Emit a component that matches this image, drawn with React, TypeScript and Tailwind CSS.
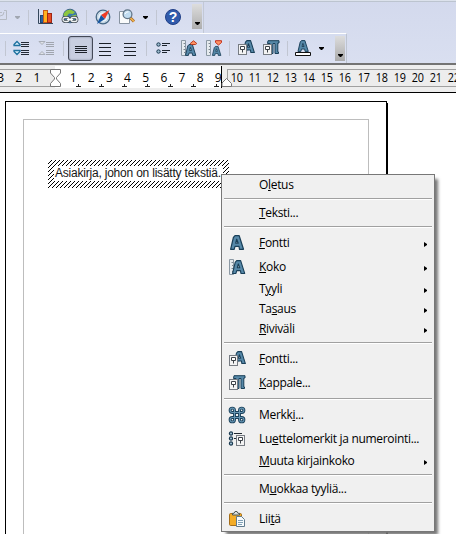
import React from "react";

type IconProps = { kind: string; className?: string };

const LetterA = ({ x = 0, y = 0, s = 1 }: { x?: number; y?: number; s?: number }) => (
  <path
    transform={`translate(${x} ${y}) scale(${s})`}
    d="M5 .7H9.2L13.5 14.3H9.5L9 11.3H5L4.2 14.3H.6L3.4 2.5ZM6.7 4.2L5.7 8.2H8.2Z"
    fill="#5688a8" stroke="#193f58" strokeWidth="1.2" fillRule="evenodd" strokeLinejoin="round"
  />
);

const StyleBox = ({ x, y }: { x: number; y: number }) => (
  <g transform={`translate(${x} ${y})`}>
    <rect x=".5" y=".5" width="8" height="10" fill="#f3f3f3" stroke="#777c83" />
    <path d="M2.5 2.5h4v3h-4zM4.5 5.5v3" fill="#fff" stroke="#3d4248" />
  </g>
);

const RulerStrip = () => (
  <>
    <path d="M.5 .5h4v15h-4z" fill="#e6ebef" stroke="#8c99a4" />
    <path d="M2.5 3.5H4M3 6.5H4M2.5 9.5H4M3 12.5H4" stroke="#7c8790" />
  </>
);

function Icon({ kind, className = "" }: IconProps) {
  const drawings: Record<string, React.ReactNode> = {
    chart: (
      <>
        <path d="M1.5 0V14.5H16" fill="none" stroke="#35475b" />
        <rect x="3.5" y="6.5" width="3" height="7" fill="#285d9c" stroke="#174578" />
        <rect x="6.5" y="1.5" width="4" height="12" fill="#ffb21d" stroke="#c4591c" />
        <rect x="10.5" y="4.5" width="4" height="9" fill="#e84c22" stroke="#9f2615" />
      </>
    ),
    globe: (
      <>
        <circle cx="8" cy="7" r="6.8" fill="#3b79ad" stroke="#3c6389" />
        <path d="M1.5 5Q4 .3 9 .8L13 3 11 5 7 4.5 5 7 2 8ZM9 7L14.3 5.5V9L10 11Z" fill="#8dc63f" />
        <rect x="1" y="8.5" width="6" height="4" rx="2" fill="none" stroke="#3b444c" strokeWidth="2.8" />
        <rect x="9" y="8.5" width="6" height="4" rx="2" fill="none" stroke="#3b444c" strokeWidth="2.8" />
        <rect x="1" y="8.5" width="6" height="4" rx="2" fill="none" stroke="#eef2f2" strokeWidth="1.3" />
        <rect x="9" y="8.5" width="6" height="4" rx="2" fill="none" stroke="#eef2f2" strokeWidth="1.3" />
        <path d="M5 10.5h6" stroke="#fff" strokeWidth="1.4" />
      </>
    ),
    compass: (
      <>
        <circle cx="8" cy="8" r="6.8" fill="#e9f2f9" stroke="#486986" strokeWidth="1.3" />
        <circle cx="8" cy="8" r="5.3" fill="none" stroke="#b4cbdc" />
        <path d="M14.5 1L10 10 6 6Z" fill="#ef3b25" />
        <path d="M2 15L6 6 10 10Z" fill="#1456a3" />
      </>
    ),
    search: (
      <>
        <path d="M.5 2.5h10v12H.5z" fill="#fafbfb" stroke="#8793a0" />
        <path d="M11 8.5L15 12.5" stroke="#a76529" strokeWidth="3" />
        <path d="M11 8.5L15 12.5" stroke="#f0b74b" strokeWidth="1.6" />
        <circle cx="8.5" cy="5.2" r="4.4" fill="#c1dcf0" stroke="#627587" strokeWidth="1.3" />
        <path d="M6 5Q7 2.5 9.5 2.8" fill="none" stroke="#fff" />
      </>
    ),
    a: <LetterA x={1} y={0} />,
    size: <><RulerStrip /><LetterA x={3} y={1} s={0.94} /></>,
    grow: <><RulerStrip /><LetterA x={4} y={4} s={0.8} /><path d="M9.2 3.5L12.5 .8 15.8 3.5 14.5 4.5h-4z" fill="#ff9364" stroke="#b93c20" /></>,
    shrink: <><RulerStrip /><LetterA x={6} y={6} s={0.66} /><path d="M9.5 .7h6v1.8L12.5 5 9.5 2.5z" fill="#ff9364" stroke="#c5321e" /></>,
    style: <><LetterA x={4.5} y={0} s={0.88} /><StyleBox x={0} y={4} /></>,
    paragraph: (
      <>
        <path d="M5 .7H16V3H14.8V12H15.5V13.5H12V3.5H10V13.5H7V3.5H4.5Z" fill="#5688a8" stroke="#193f58" />
        <StyleBox x={0} y={4} />
      </>
    ),
    command: (
      <>
        <path d="M5.5 5.5V3.3A2.2 2.2 0 1 0 3.3 5.5H12.7A2.2 2.2 0 1 0 10.5 3.3V12.7A2.2 2.2 0 1 0 12.7 10.5H3.3A2.2 2.2 0 1 0 5.5 12.7Z" fill="none" stroke="#183f59" strokeWidth="2.9" />
        <path d="M5.5 5.5V3.3A2.2 2.2 0 1 0 3.3 5.5H12.7A2.2 2.2 0 1 0 10.5 3.3V12.7A2.2 2.2 0 1 0 12.7 10.5H3.3A2.2 2.2 0 1 0 5.5 12.7Z" fill="none" stroke="#6594b2" strokeWidth="1.1" />
      </>
    ),
    bullets: (
      <>
        <path d="M5 2.5h8M5 7.5h2" stroke="#222a31" />
        {[2.5, 7.5, 12.5].map(y => <circle key={y} cx="2" cy={y} r="1.6" fill="#a5c5d8" stroke="#18384f" strokeWidth="1.2" />)}
        <StyleBox x={7} y={4} />
      </>
    ),
    list: (
      <>
        {[4.5, 11.5].map(y => <React.Fragment key={y}><circle cx="2.5" cy={y} r="1.7" fill="#9fbdd1" stroke="#18384f" /><path d={`M6 ${y - 1}h8M6 ${y + 1}h5`} stroke="#1d252e" strokeWidth="1" /></React.Fragment>)}
      </>
    ),
    paste: (
      <>
        <rect x=".5" y="2.5" width="12" height="12" rx="1.2" fill="#f3ac27" stroke="#a56d19" />
        <path d="M3.5 4V2.3H5L6 .5H8L9 2.3H10.5V4Z" fill="#d9dfdf" stroke="#4d5855" />
        <path d="M7.5 5.5h5l3 3v7h-8z" fill="#f6fafc" stroke="#607a8c" />
        <path d="M9 9.5h5M9 11.5h5M9 13.5h4" stroke="#80a0b5" />
      </>
    ),
  };
  return <svg viewBox="0 0 16 16" className={`block h-4 w-4 shrink-0 overflow-visible ${className}`}>{drawings[kind]}</svg>;
}

const DownArrow = ({ className = "" }: { className?: string }) => (
  <svg viewBox="0 0 5 3" className={`block h-[3px] w-[5px] shrink-0 ${className}`}><path d="M0 0H5V1L3 3H2L0 1Z" fill="currentColor" /></svg>
);
const Divider = ({ className = "" }: { className?: string }) => <i className={`block h-[15px] w-px shrink-0 bg-[#c1c6d2] ${className}`} />;

const Lines = ({ gap }: { gap: number }) => (
  <svg viewBox="0 0 12 14" className="block h-[14px] w-3">
    {[0, 1, 2, 3].map(i => <rect key={i} x="0" y={7 + (i - 1.5) * gap} width="12" height="1" fill="#1b2028" />)}
  </svg>
);

const Spacing = ({ grey = false }: { grey?: boolean }) => (
  <svg viewBox="0 0 17 16" className="block h-4 w-[17px] shrink-0">
    <path d="M8 2.5h8M8 4.5h8M8 6.5h8M8 10.5h8M8 12.5h8M8 14.5h8" stroke={grey ? "#a0a5ae" : "#242b36"} />
    <path d={grey ? "M1 1.5h6L4 4.5ZM1 14.5h6L4 11.5Z" : "M1 4.5L4 1.5 7 4.5V5.5H1ZM1 10.5V11.5L4 14.5 7 11.5V10.5Z"} fill={grey ? "#e0e3e9" : "#d5eefb"} stroke={grey ? "#a8adb6" : "#1f719f"} strokeWidth={grey ? 1 : 1.3} />
  </svg>
);

function Toolbars() {
  return (
    <header className="h-[65px] border-b-2 border-[#737373] bg-gradient-to-b from-[#d3d9ed] to-[#d9dff0]">
      <div className="h-[2px] border-b border-[#bcc4cf] bg-[#dce2ec]" />
      <div className="flex h-[31px] w-[204px] items-center border-r border-[#c2c8d5] bg-gradient-to-b from-[#d4daee] to-[#dae0f1] pb-px">
        <svg viewBox="0 0 8 14" className="-mt-0.5 h-[14px] w-2 shrink-0"><path d="M0 3.5H2M4 1.5H6.5V10.5H0M0 7Q4 7 4 3" fill="none" stroke="#b5bac3" /></svg>
        <DownArrow className="ml-[7px] text-[#a1a7b2]" />
        <Divider className="ml-2" />
        <Icon kind="chart" className="ml-[8px]" />
        <Icon kind="globe" className="ml-[9px]" />
        <Divider className="ml-2" />
        <Icon kind="compass" className="ml-[8px]" />
        <Icon kind="search" className="ml-[8px]" />
        <DownArrow className="ml-[8px]" />
        <Divider className="ml-[8px]" />
        <span className="ml-[8px] flex h-4 w-4 shrink-0 items-center justify-center rounded-full border border-[#203f87] bg-[#315bab] font-['Liberation_Sans',sans-serif] text-[14px] font-bold leading-none text-white">?</span>
        <div className="-mt-px ml-[11px] flex h-[25px] w-[10px] shrink-0 items-end justify-center bg-gradient-to-b from-[#dddddd] to-[#aeaeae] pb-1"><DownArrow /></div>
      </div>
      <div className="flex h-[30px] w-[347px] items-center border-r border-t border-r-[#bdc4d0] border-t-white bg-gradient-to-b from-[#d5dcef] to-[#dde2f3]">
        <Divider className="ml-[5px]" />
        <div className="-mt-px ml-[7px]"><Spacing /></div>
        <div className="-mt-px ml-[8px]"><Spacing grey /></div>
        <Divider className="ml-[8px]" />
        <div className="ml-[4px] flex h-[25px] w-[25px] shrink-0 items-center justify-center rounded-[3px] border border-[#444957] bg-[#c8cee0] shadow-[inset_0_0_2px_#777e91]"><Lines gap={2} /></div>
        <div className="ml-[6px]"><Lines gap={4} /></div>
        <div className="ml-[13px]"><Lines gap={4} /></div>
        <Divider className="ml-[10px]" />
        <Icon kind="list" className="-mt-px ml-[9px]" />
        <Icon kind="grow" className="-mt-px ml-[9px]" />
        <Icon kind="shrink" className="-mt-px ml-[9px]" />
        <Divider className="ml-[7px]" />
        <Icon kind="style" className="-mt-px ml-[8px]" />
        <Icon kind="paragraph" className="-mt-px ml-[9px]" />
        <Divider className="ml-[8px]" />
        <svg viewBox="0 0 16 16" className="-mt-px ml-[7px] h-4 w-4 shrink-0"><LetterA x={2.5} y={0} s={0.8} /><path d="M.5 12.5h15v3H.5z" fill="#fff" stroke="#111" /></svg>
        <DownArrow className="-mt-px ml-[8px]" />
        <div className="ml-auto mr-px flex h-[25px] w-[10px] shrink-0 items-end justify-center bg-gradient-to-b from-[#dddddd] to-[#aaa] pb-1"><DownArrow /></div>
      </div>
    </header>
  );
}

function Ruler() {
  return (
    <div className="relative h-7 border-b border-black bg-[#ededed] font-['Open_Sans',sans-serif]">
      <div className="flex h-[27px] pt-px">
        <span className="mt-[3px] h-[18px] w-[55px] border-y border-[#a0a0a0]" />
        <span className="h-[22px] w-[167px] border-r border-black bg-white" />
        <span className="ml-[5px] mt-[3px] h-[18px] flex-1 border-y border-l border-[#a0a0a0]" />
      </div>
      <div className="absolute -left-[8.5px] top-1 flex h-[18px] items-center text-[12px] leading-none text-black">
        {Array.from({ length: 26 }, (_, i) => <span key={i} className="flex w-[18.15px] shrink-0 justify-center"><span className={i > 12 ? "scale-x-[.9]" : ""}>{i === 3 ? "" : Math.abs(i - 3)}</span></span>)}
      </div>
      <svg viewBox="0 0 456 28" className="absolute inset-0 h-7 w-full">
        <path d="M50.5 4.5H60.5V8L56.5 12.5V14L60.5 18.5V21.5H50.5V18.5L54.5 14V12.5L50.5 8Z" fill="#fff" stroke="#777" />
        {[78, 101, 124, 147, 170, 193, 216].map(x => <path key={x} d={`M${x + 0.5} 19v3M${x - 2} 21.5h5`} stroke="#222" />)}
        <path d="M222 21.5V18L226.5 13.5 231.5 18.5V21.5Z" fill="#fff" stroke="#777" />
      </svg>
    </div>
  );
}

type Entry = { before?: string; key: string; after: string; icon?: string; arrow?: boolean; tall?: boolean };
const groups: Entry[][] = [
  [{ before: "O", key: "l", after: "etus" }],
  [{ key: "T", after: "eksti..." }],
  [
    { key: "F", after: "ontti", icon: "a", arrow: true, tall: true },
    { key: "K", after: "oko", icon: "size", arrow: true, tall: true },
    { before: "T", key: "y", after: "yli", arrow: true },
    { before: "Ta", key: "s", after: "aus", arrow: true },
    { key: "R", after: "iviväli", arrow: true },
  ],
  [{ key: "F", after: "ontti...", icon: "style", tall: true }, { key: "K", after: "appale...", icon: "paragraph", tall: true }],
  [
    { before: "Merkk", key: "i", after: "...", icon: "command", tall: true },
    { before: "Lu", key: "e", after: "ttelomerkit ja numerointi...", icon: "bullets", tall: true },
    { key: "M", after: "uuta kirjainkoko", arrow: true },
  ],
  [{ before: "M", key: "u", after: "okkaa tyyliä..." }],
  [{ before: "Lii", key: "t", after: "ä", icon: "paste", tall: true }],
];

function ContextMenu() {
  return (
    <nav className="absolute left-[221px] top-[174px] w-[214px] border border-[#777] bg-[#f0f0f0] font-['Open_Sans',sans-serif] text-[12px] leading-none tracking-[-0.32px] text-black shadow-[4px_4px_3px_-1px_#777]">
      {groups.map((group, n) => (
        <React.Fragment key={n}>
          {n > 0 && <div className="h-2 px-[2px] pt-[3px]"><div className="h-[2px] border-b border-white bg-[#a0a0a0]" /></div>}
          {group.map((item, i) => (
            <div key={i} className={`flex items-center pl-[7px] pr-[7px] ${item.tall ? "h-6" : "h-5"}`}>
              <span className="w-[30px] shrink-0">{item.icon && <Icon kind={item.icon} />}</span>
              <span className="whitespace-nowrap">{item.before}<u className="underline-offset-1">{item.key}</u>{item.after}</span>
              {item.arrow && <svg viewBox="0 0 3 5" className="ml-auto mt-[3px] h-[5px] w-[3px]"><path d="M0 0L3 2V3L0 5Z" fill="#000" /></svg>}
            </div>
          ))}
        </React.Fragment>
      ))}
    </nav>
  );
}

function HatchedFrame() {
  return (
    <svg className="absolute inset-0 h-full w-full" shapeRendering="crispEdges">
      <defs>
        <pattern id="hatch" width="4" height="4" patternUnits="userSpaceOnUse">
          <path d="M3 0h1v1H3zM2 1h1v1H2zM1 2h1v1H1zM0 3h1v1H0z" fill="#000" />
        </pattern>
      </defs>
      <rect width="100%" height="100%" fill="url(#hatch)" />
    </svg>
  );
}

export default function App() {
  return (
    <div className="relative h-[534px] w-[456px] overflow-hidden bg-white">
      <Toolbars />
      <Ruler />
      <main className="h-[441px] pl-[5px] pt-[6px]">
        <section className="mt-[2px] h-[440px] w-[382px] border-l border-r border-t border-black bg-white pl-[17px] pt-[17px] shadow-[1px_2px_0_#000]">
          <div className="h-[430px] w-[346px] border border-[#bdbdbd] pl-6 pt-10">
            <div className="relative h-[28px] w-[181px] px-[6px] py-[6px]">
              <HatchedFrame />
              <p className="relative h-[15px] whitespace-nowrap bg-white pl-px font-['Liberation_Sans',sans-serif] text-[12px] leading-[15px] tracking-[-0.21px] text-[#171717]">Asiakirja, johon on lisätty tekstiä.</p>
            </div>
          </div>
        </section>
      </main>
      <ContextMenu />
    </div>
  );
}
